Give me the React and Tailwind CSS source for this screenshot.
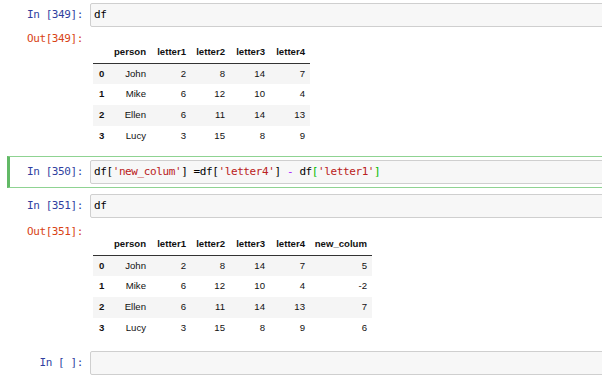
import React from "react";

const mono = { fontFamily: '"DejaVu Sans Mono", "Liberation Mono", monospace' };

function Prompt({ children, out }) {
  return (
    <div
      className={`w-[80px] shrink-0 text-right pr-[7px] text-[11px] tracking-[-0.4px] whitespace-pre ${
        out ? "text-[#D84315] leading-[14px]" : "text-[#303F9F] leading-[24px]"
      }`}
      style={mono}
    >
      {children}
    </div>
  );
}

function InputRow({ label, children }) {
  return (
    <div className="flex">
      <Prompt>{label}</Prompt>
      <div
        className="flex-1 h-[24px] bg-[#f7f7f7] border border-[#cfcfcf] rounded-[2px] pl-[3px] text-[11px] tracking-[-0.4px] leading-[22px] text-[#000] whitespace-pre"
        style={mono}
      >
        {children}
      </div>
    </div>
  );
}

const baseRows = [
  ["0", "John", 2, 8, 14, 7, 5],
  ["1", "Mike", 6, 12, 10, 4, -2],
  ["2", "Ellen", 6, 11, 14, 13, 7],
  ["3", "Lucy", 3, 15, 8, 9, 6],
];

function DataTable({ withNew }) {
  const headers = ["person", "letter1", "letter2", "letter3", "letter4"];
  if (withNew) headers.push("new_colum");
  const widths = [17, 41, 40, 39, 40, 40];
  if (withNew) widths.push(62);
  const total = widths.reduce((a, b) => a + b, 0);
  return (
    <table
      className="table-fixed border-collapse text-[9.6px] text-[#111] ml-[3px]"
      style={{ fontFamily: '"Liberation Sans", Arial, sans-serif', width: total }}
    >
      <colgroup>
        {widths.map((w, i) => (
          <col key={i} style={{ width: w }} />
        ))}
      </colgroup>
      <thead>
        <tr className="border-b border-[#333]">
          <th className="p-0 h-[21px]"></th>
          {headers.map((h) => (
            <th key={h} className="p-0 h-[21px] pr-[5px] text-right font-bold">
              {h}
            </th>
          ))}
        </tr>
      </thead>
      <tbody>
        {baseRows.map((r, i) => (
          <tr key={i} className={i % 2 === 0 ? "bg-[#f5f5f5]" : "bg-white"}>
            <td className="p-0 h-[21px] pl-[6px] text-left font-bold">{r[0]}</td>
            {r.slice(1, withNew ? 7 : 6).map((v, j) => (
              <td key={j} className="p-0 h-[21px] pr-[5px] text-right">
                {v}
              </td>
            ))}
          </tr>
        ))}
      </tbody>
    </table>
  );
}

export default function App() {
  return (
    <div className="w-[602px] h-[382px] overflow-hidden bg-white">
      <div className="w-[640px] pl-[7px]">
        {/* Cell 349 */}
        <div className="-mt-[1px] border border-l-[3px] border-transparent pt-[3px] pb-[3px]">
          <InputRow label="In [349]:">df</InputRow>
          <div className="flex">
            <div className="pt-[5px]">
              <Prompt out>Out[349]:</Prompt>
            </div>
            <div className="pt-[15px] pb-[5px]">
              <DataTable />
            </div>
          </div>
        </div>

        {/* Cell 350 selected */}
        <div className="border border-l-[3px] border-[#8fd392] border-l-[#62b966] py-[3px]">
          <InputRow label="In [350]:">
            <span>df[</span>
            <span className="text-[#BA2121]">'new_colum'</span>
            <span>] =df[</span>
            <span className="text-[#BA2121]">'letter4'</span>
            <span>] </span>
            <span className="text-[#AA22FF]">-</span>
            <span> df</span>
            <span className="text-[#00bb00]">[</span>
            <span className="text-[#BA2121]">'letter1'</span>
            <span className="text-[#00bb00]">]</span>
          </InputRow>
        </div>

        {/* Cell 351 */}
        <div className="mt-[2px] border border-l-[3px] border-transparent py-[3px]">
          <InputRow label="In [351]:">df</InputRow>
          <div className="flex">
            <div className="pt-[7px]">
              <Prompt out>Out[351]:</Prompt>
            </div>
            <div className="pt-[16px] pb-[4px]">
              <DataTable withNew />
            </div>
          </div>
        </div>

        {/* Empty cell */}
        <div className="border border-l-[3px] border-transparent py-[3px]">
          <InputRow label="In [ ]:"></InputRow>
        </div>
      </div>
    </div>
  );
}
